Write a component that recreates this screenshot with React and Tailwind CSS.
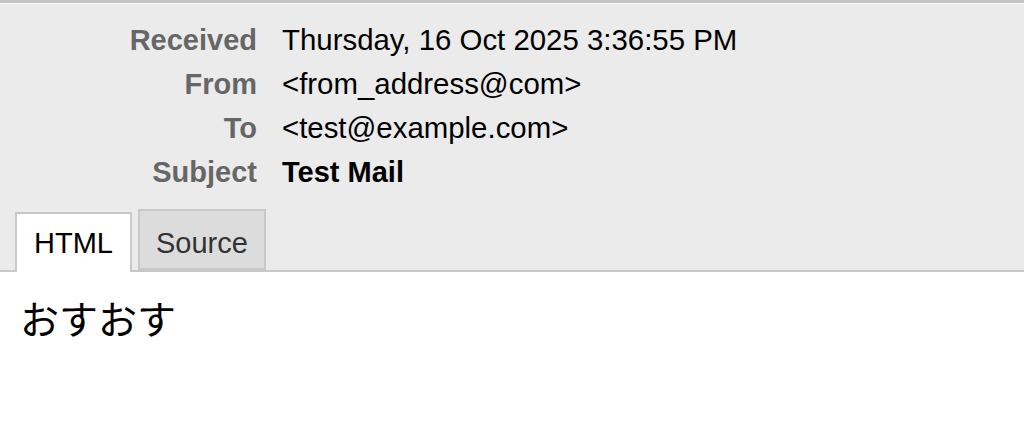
import React from 'react';

const campos = [
  { rotulo: 'Received', valor: 'Thursday, 16 Oct 2025 3:36:55 PM' },
  { rotulo: 'From', valor: '<from_address@com>' },
  { rotulo: 'To', valor: '<test@example.com>' },
  { rotulo: 'Subject', valor: 'Test Mail', negrito: true },
];

const App = () => {
  return (
    <div className="min-h-[426px] w-full bg-white font-['Liberation_Sans',Arial,sans-serif]">
      {/* CABEÇALHO DA MENSAGEM */}
      <div className="border-t-[3px] border-[#c4c4c4]">
        <div className="border-t border-white bg-[#ebebeb]">
          <div className="grid grid-cols-[257px_1fr] gap-x-[25px] pt-[14px] text-[29px] leading-[44px]">
            {campos.map((c) => (
              <React.Fragment key={c.rotulo}>
                <div className="text-right font-bold text-[#666666]">{c.rotulo}</div>
                <div className={c.negrito ? 'font-bold text-black' : 'text-[29.4px] text-black'}>{c.valor}</div>
              </React.Fragment>
            ))}
          </div>

          {/* ABAS */}
          <div className="flex items-end gap-[6px] border-b-2 border-[#c8c8c8] pl-[15px] pt-[15px] text-[29px] leading-[32px]">
            <div className="-mb-[2px] border-2 border-b-0 border-[#c8c8c8] bg-white px-[17px] pt-[13px] pb-[13px] text-black">
              HTML
            </div>
            <div className="border-2 border-[#c8c8c8] bg-[#dcdcdc] px-4 pt-[16px] pb-[9px] text-[#333333]">
              Source
            </div>
          </div>
        </div>
      </div>

      {/* CORPO */}
      <div className="px-[20px] pt-[26px] font-['Noto_Sans_CJK_JP',sans-serif] text-[39px] leading-none text-black">
        おすおす
      </div>
    </div>
  );
};

export default App;
